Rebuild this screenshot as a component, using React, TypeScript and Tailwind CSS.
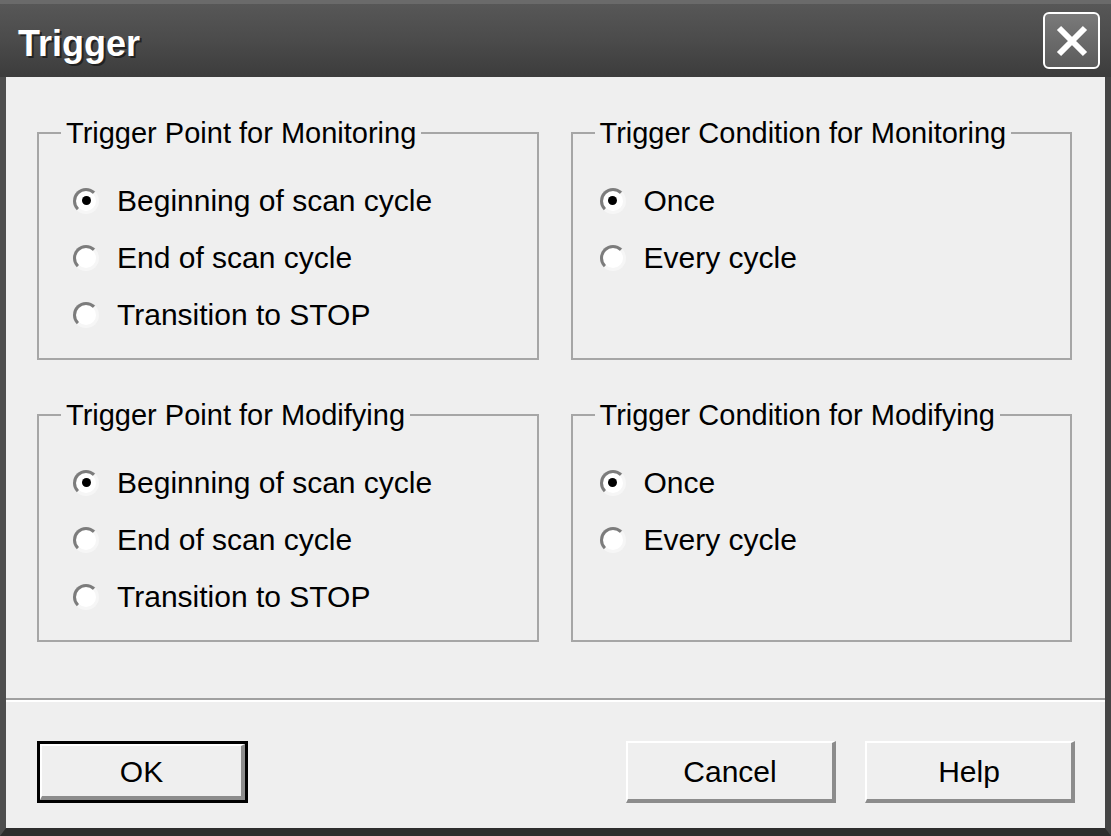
const font = { fontFamily: '"Liberation Sans", Arial, sans-serif' };

const Radio = ({ checked }: { checked?: boolean }) => (
  <span className="flex h-[26px] w-[26px] shrink-0 items-center justify-center rounded-full border-[3px] border-t-[#7c7c7c] border-l-[#7c7c7c] border-r-[#f6f6f6] border-b-[#f6f6f6] bg-white">
    {checked && <span className="h-[9px] w-[9px] rounded-full bg-black" />}
  </span>
);

type GroupProps = {
  title: string;
  options: string[];
  inset: string;
};

const Group = ({ title, options, inset }: GroupProps) => (
  <fieldset className="border-2 border-[#a6a6a6] pt-[22px] pb-[15px]">
    <legend className="ml-[22px] px-[5px] text-[29px] leading-[34px] text-black">{title}</legend>
    <div className={inset}>
      {options.map((label, i) => (
        <div key={label} className="flex h-[57px] items-center gap-[18px]">
          <Radio checked={i === 0} />
          <span className="text-[30px] leading-none text-black">{label}</span>
        </div>
      ))}
    </div>
  </fieldset>
);

const Button = ({ label }: { label: string }) => (
  <button className="flex h-full w-full items-center justify-center border-t-2 border-l-2 border-r-4 border-b-4 border-t-white border-l-white border-r-[#8c8c8c] border-b-[#8c8c8c] bg-[#efefef] text-[30px] text-black">
    {label}
  </button>
);

const points = ["Beginning of scan cycle", "End of scan cycle", "Transition to STOP"];
const conditions = ["Once", "Every cycle"];

export default function App() {
  return (
    <div style={font} className="flex h-[836px] w-[1111px] flex-col bg-[#3a3a3a]">
      {/* Title bar */}
      <div className="flex h-[77px] shrink-0 items-center justify-between border-t-4 border-[#6a6a6a] bg-linear-to-b from-[#575757] via-[#4b4b4b] to-[#3c3c3c] pl-[18px] pr-[11px]">
        <span className="mt-[6px] text-[36px] font-bold leading-[36px] text-white [text-shadow:2px_2px_0_#222]">
          Trigger
        </span>
        <div className="flex h-[57px] w-[57px] items-center justify-center rounded-[6px] border-2 border-white bg-linear-to-b from-[#7a7a7a] to-[#5c5c5c]">
          <svg width="32" height="32" viewBox="0 0 32 32">
            <path d="M3 3 L29 29 M29 3 L3 29" stroke="white" strokeWidth="6" />
          </svg>
        </div>
      </div>

      {/* Window body */}
      <div className="flex flex-1 border-l-[6px] border-r-[6px] border-b-[8px] border-l-[#4e4e4e] border-r-[#444] border-b-[#2e2e2e]">
        <div className="flex flex-1 flex-col bg-[#efefef]">
          <div className="grid grid-cols-2 gap-x-[32px] gap-y-[38px] pl-[31px] pr-[33px] pt-[39px]">
            <Group title="Trigger Point for Monitoring" options={points} inset="pl-[34px]" />
            <Group title="Trigger Condition for Monitoring" options={conditions} inset="pl-[27px]" />
            <Group title="Trigger Point for Modifying" options={points} inset="pl-[34px]" />
            <Group title="Trigger Condition for Modifying" options={conditions} inset="pl-[27px]" />
          </div>

          <div className="mt-[56px] border-t-2 border-b-2 border-t-[#a0a0a0] border-b-white" />

          <div className="mt-[39px] flex h-[62px] items-stretch justify-between pl-[31px] pr-[30px]">
            <div className="w-[211px] border-[3px] border-black">
              <Button label="OK" />
            </div>
            <div className="flex gap-[29px]">
              <div className="w-[210px]">
                <Button label="Cancel" />
              </div>
              <div className="w-[210px]">
                <Button label="Help" />
              </div>
            </div>
          </div>
        </div>
      </div>
    </div>
  );
}
